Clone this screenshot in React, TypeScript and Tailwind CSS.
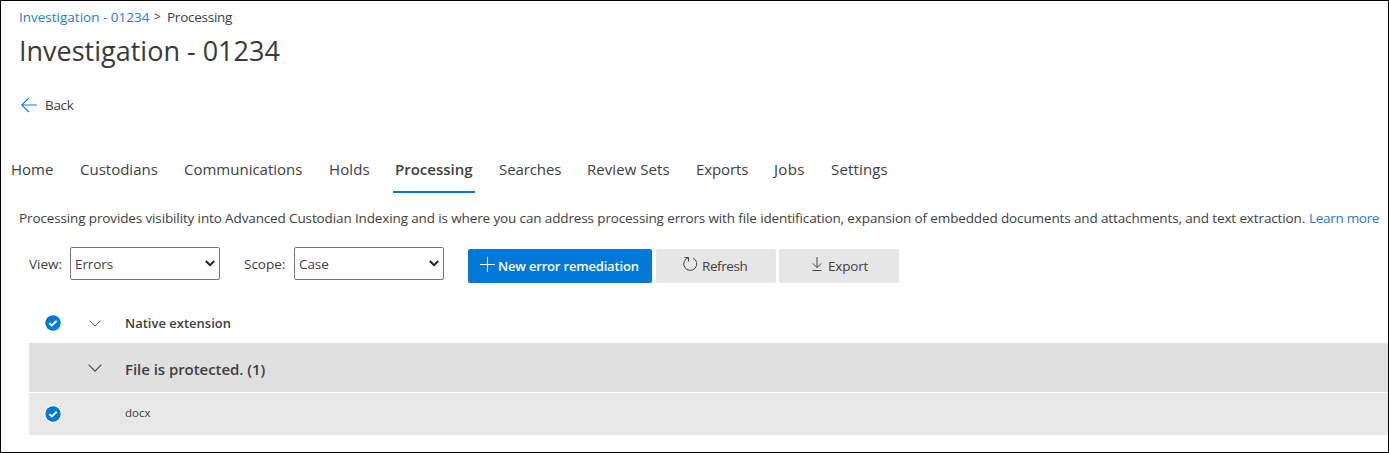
import type { ReactNode } from 'react';

const tabs = [
  { label: 'Home', box: 'w-[69px]', text: '' },
  { label: 'Custodians', box: 'w-[104px]', text: '' },
  { label: 'Communications', box: 'w-[145px]', text: '' },
  { label: 'Holds', box: 'w-[64px]', text: 'tracking-[0.1px]' },
  { label: 'Processing', box: 'w-[106px]', text: '' },
  { label: 'Searches', box: 'w-[88px]', text: 'tracking-[-0.1px]' },
  { label: 'Review Sets', box: 'w-[109px]', text: 'tracking-[0.05px]' },
  { label: 'Exports', box: 'w-[78px]', text: 'tracking-[-0.1px]' },
  { label: 'Jobs', box: 'w-[57px]', text: 'tracking-[0.3px]' },
  { label: 'Settings', box: 'w-[70px]', text: 'tracking-[0.15px]' },
];

function Chevron({ size }: { size: number }) {
  return (
    <svg width={size} height={size / 2 + 1} viewBox="0 0 14 8" fill="none" stroke="#444" strokeWidth="1.1">
      <path d="M.6.7 7 7.1 13.4.7" />
    </svg>
  );
}

function CheckCircle() {
  return (
    <svg width="18" height="18" viewBox="0 0 18 18" fill="none">
      <circle cx="9" cy="9" r="8.8" fill="#fff" />
      <circle cx="9" cy="9" r="7.7" fill="#0078d7" />
      <path d="m5.3 9.1 2.5 2.4 4.9-4.8" stroke="#fff" strokeWidth="1.9" />
    </svg>
  );
}

function SelectBox({ children }: { children: ReactNode }) {
  return (
    <button className="flex h-[33px] w-[150px] items-center justify-between rounded-[2px] border border-[#767676] bg-white pr-[4px] pl-[4px]">
      <span className="tracking-[-0.1px]">{children}</span>
      <svg width="10" height="7" viewBox="0 0 10 7" fill="none" stroke="#222" strokeWidth="2">
        <path d="m.8 1 4.2 4.2L9.2 1" />
      </svg>
    </button>
  );
}

export default function App() {
  return (
    <div className="flex h-[453px] w-[1389px] flex-col overflow-hidden border border-black bg-white font-['Open_Sans','Noto_Sans',sans-serif] text-[13.5px] leading-[20px] whitespace-nowrap text-[#404040]">
      <nav className="mt-[6px] ml-[18px] flex h-[20px]">
        <a className="w-[135px] text-[#2b7bc0]">Investigation - 01234</a>
        <span className="w-[13px] text-[12px]">&gt;</span>
        <span className="tracking-[-0.25px]">Processing</span>
      </nav>
      <h1 className="mt-[4px] ml-[18px] h-[40px] text-[27px] leading-[40px] text-[#3a3a3a]">Investigation - 01234</h1>
      <button className="mt-[24px] ml-[20px] flex h-[20px] items-center gap-[8px]">
        <svg width="16" height="16" viewBox="0 0 16 16" fill="none" stroke="#0e7fd9" strokeWidth="1.1">
          <path d="M16 8H.8M7.8 1 .8 8l7 7" />
        </svg>
        <span className="tracking-[-0.3px]">Back</span>
      </button>
      <div className="mt-[44px] ml-[10px] flex h-[34px] text-[15px] leading-[20px]">
        {tabs.map((tab) => (
          <div key={tab.label} className={tab.box}>
            {tab.label === 'Processing' ? (
              <div className="h-[34px] w-[82px] border-b-2 border-[#0078d7] pl-[2px] font-semibold">
                <span className={tab.text}>{tab.label}</span>
              </div>
            ) : (
              <span className={tab.text}>{tab.label}</span>
            )}
          </div>
        ))}
      </div>
      <p className="mt-[15px] ml-[18px] flex h-[20px]">
        <span className="w-[1290px] tracking-[-0.128px]">
          Processing provides visibility into Advanced Custodian Indexing and is where you can address processing errors with file identification, expansion of embedded documents and attachments, and text extraction.
        </span>
        <a className="tracking-[-0.3px] text-[#2b7bc0]">Learn more</a>
      </p>
      <div className="mt-[19px] ml-[28px] flex h-[36px]">
        <span className="mt-[7px] w-[41px]">View:</span>
        <SelectBox>Errors</SelectBox>
        <span className="mt-[7px] ml-[24px] w-[50px]">Scope:</span>
        <SelectBox>Case</SelectBox>
        <button className="mt-[2px] ml-[24px] flex h-[34px] w-[184px] rounded-[2px] bg-[#0078d7] pt-[7px] pl-[12px] font-semibold text-white">
          <svg className="mr-[3px]" width="15" height="16" viewBox="0 0 15 16" fill="none" stroke="#fff" strokeWidth="1.1">
            <path d="M0 8.5h15M7.5 1v15" />
          </svg>
          <span className="text-[13px] tracking-[-0.18px]">New error remediation</span>
        </button>
        <button className="mt-[2px] ml-[4px] flex h-[34px] w-[120px] rounded-[2px] bg-[#e6e6e6] pt-[7px] pl-[27px]">
          <svg className="mr-[3px]" width="16" height="16" viewBox="0 0 16 16" fill="none" stroke="#444" strokeWidth="1">
            <path d="M1.5 1.5h4v4M5.3 1.7A6.5 6.5 0 1 0 10 2" />
          </svg>
          <span className="tracking-[-0.4px]">Refresh</span>
        </button>
        <button className="mt-[2px] ml-[3px] flex h-[34px] w-[120px] rounded-[2px] bg-[#e6e6e6] pt-[7px] pl-[33px]">
          <svg className="mr-[6px]" width="10" height="16" viewBox="0 0 10 16" fill="none" stroke="#444" strokeWidth="1">
            <path d="M5 1v10.5M.8 7.4 5 11.6l4.2-4.2M.5 14.5h9" />
          </svg>
          <span className="tracking-[-0.2px]">Export</span>
        </button>
      </div>
      <div className="mt-[20px] ml-[28px] flex h-[40px] items-center pl-[15px]">
        <CheckCircle />
        <span className="ml-[27px] flex w-[36px]"><Chevron size={12} /></span>
        <span className="text-[13px] font-semibold">Native extension</span>
      </div>
      <div className="ml-[28px] flex h-[49px] items-center bg-[#e0e0e0] pl-[59px]">
        <span className="flex w-[37px]"><Chevron size={14} /></span>
        <span className="mt-[3px] text-[15px] tracking-[-0.05px] font-semibold">File is protected. (1)</span>
      </div>
      <div className="mt-px ml-[28px] flex h-[42px] items-center bg-[#e8e8e8] pl-[15px]">
        <CheckCircle />
        <span className="mb-[2px] ml-[63px] text-[11.5px]">docx</span>
      </div>
    </div>
  );
}
